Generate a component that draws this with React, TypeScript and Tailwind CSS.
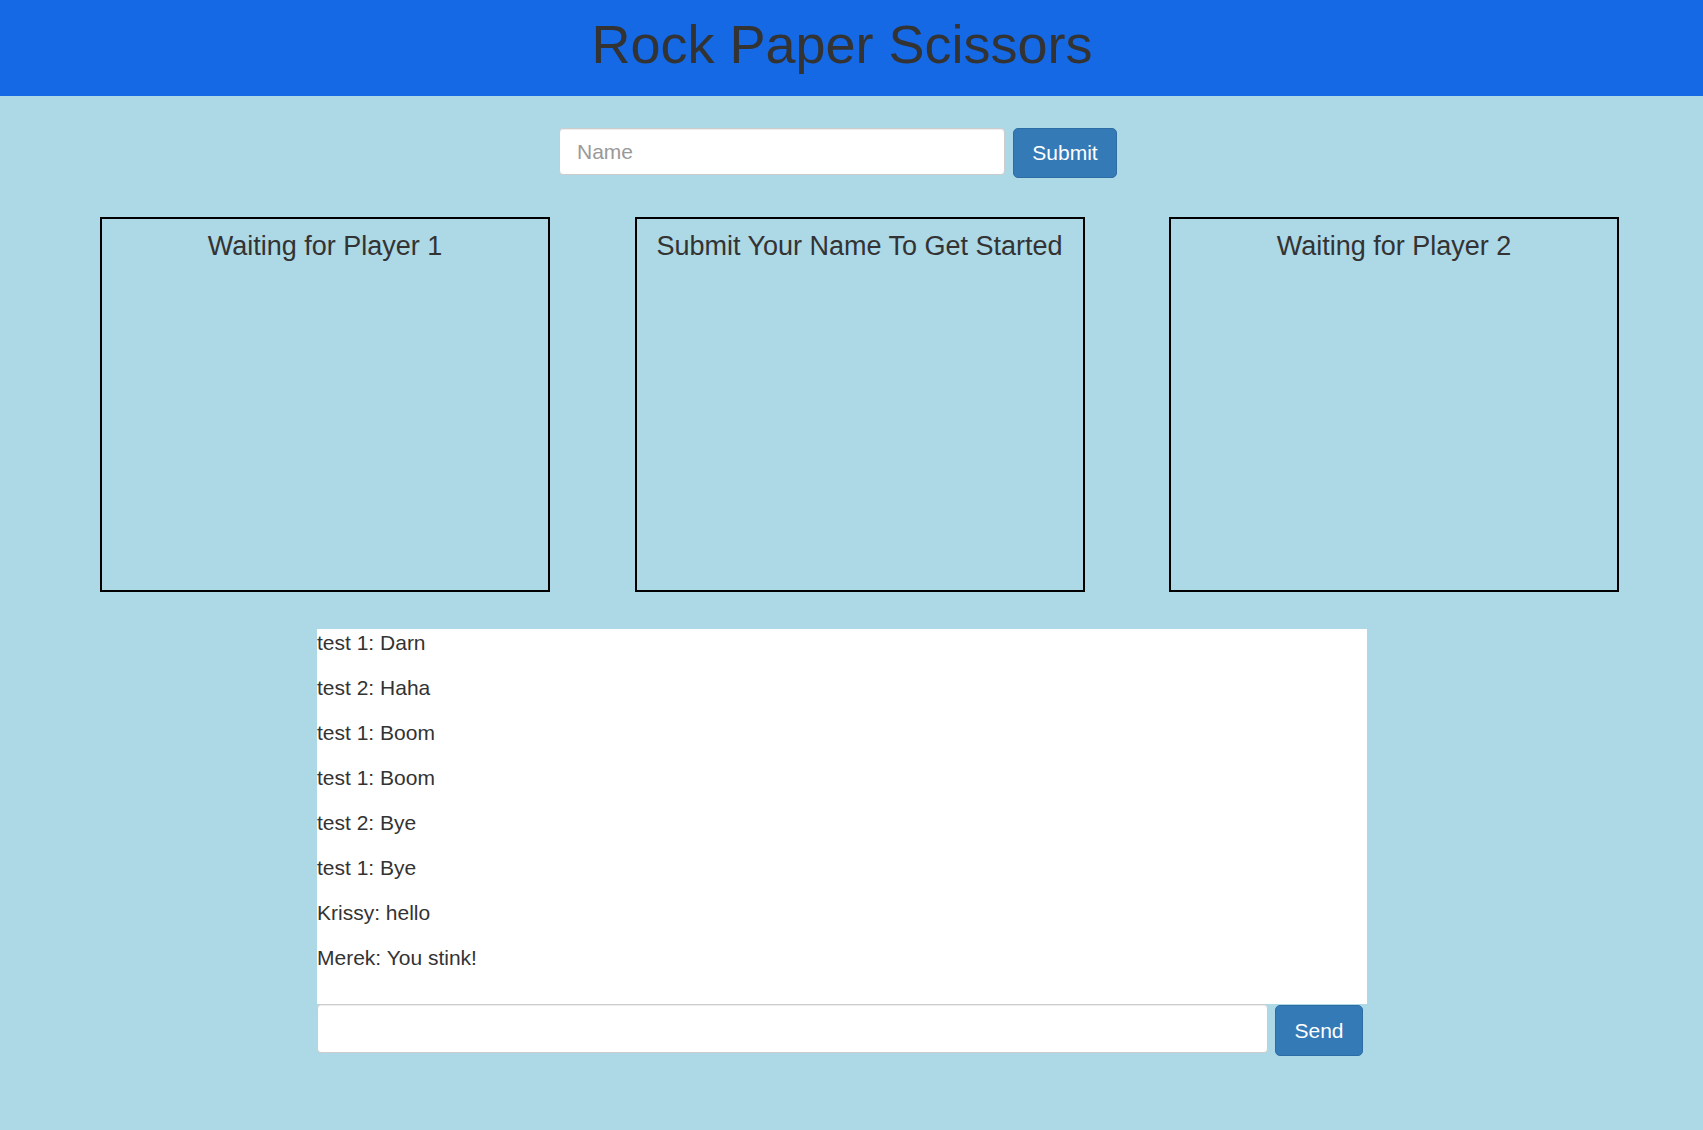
import React from 'react'

const messages = [
    'test 1: Darn',
    'test 2: Haha',
    'test 1: Boom',
    'test 1: Boom',
    'test 2: Bye',
    'test 1: Bye',
    'Krissy: hello',
    'Merek: You stink!',
]

const boxes = ['Waiting for Player 1', 'Submit Your Name To Get Started', 'Waiting for Player 2']

const App = () => {
    return (
        <div className="min-h-screen bg-[#add8e6] text-[#333] font-['Liberation_Sans',Arial,sans-serif]">

            <header className="h-[96px] bg-[#1569e5] pr-[19px] text-center">
                <h1 className="pt-[14px] text-[54px] leading-[60px]">Rock Paper Scissors</h1>
            </header>

            <div className="w-[1684px] pb-[60px]">

                {/* name form */}
                <div className="mt-[32px] flex justify-center items-start gap-[8px] pr-[8px]">
                    <input
                        placeholder="Name"
                        className="w-[446px] h-[47px] bg-white border border-[#ccc] rounded-[4px] pl-[17px] text-[21px] shadow-[inset_0_1px_1px_rgba(0,0,0,0.075)] placeholder:text-[#999] outline-none"
                    />
                    <button className="w-[104px] h-[50px] bg-[#337ab7] border border-[#2e6da4] rounded-[5px] text-white text-[21px]">
                        Submit
                    </button>
                </div>

                {/* player boxes */}
                <div className="mt-[39px] flex pl-[100px] gap-[84.5px]">
                    {boxes.map((b, i) => (
                        <div key={i} className="w-[450px] h-[375px] border-2 border-black text-center">
                            <h3 className="pt-[13px] text-[27px] leading-[29px]">{b}</h3>
                        </div>
                    ))}
                </div>

                {/* chat */}
                <div className="mt-[37px] w-[1050px] mx-auto">
                    <div className="h-[375px] bg-white overflow-hidden">
                        {messages.map((m, i) => (
                            <p key={i} className="text-[21px] leading-[28px] mb-[17px]">{m}</p>
                        ))}
                    </div>
                    <div className="flex items-start gap-[7px]">
                        <input
                            className="w-[951px] h-[49px] bg-white border border-[#ccc] rounded-[4px] px-[12px] text-[21px] shadow-[inset_0_1px_1px_rgba(0,0,0,0.075)] outline-none"
                        />
                        <button className="mt-[1px] w-[88px] h-[51px] bg-[#337ab7] border border-[#2e6da4] rounded-[5px] text-white text-[21px]">
                            Send
                        </button>
                    </div>
                </div>
            </div>
        </div>
    )
}

export default App
